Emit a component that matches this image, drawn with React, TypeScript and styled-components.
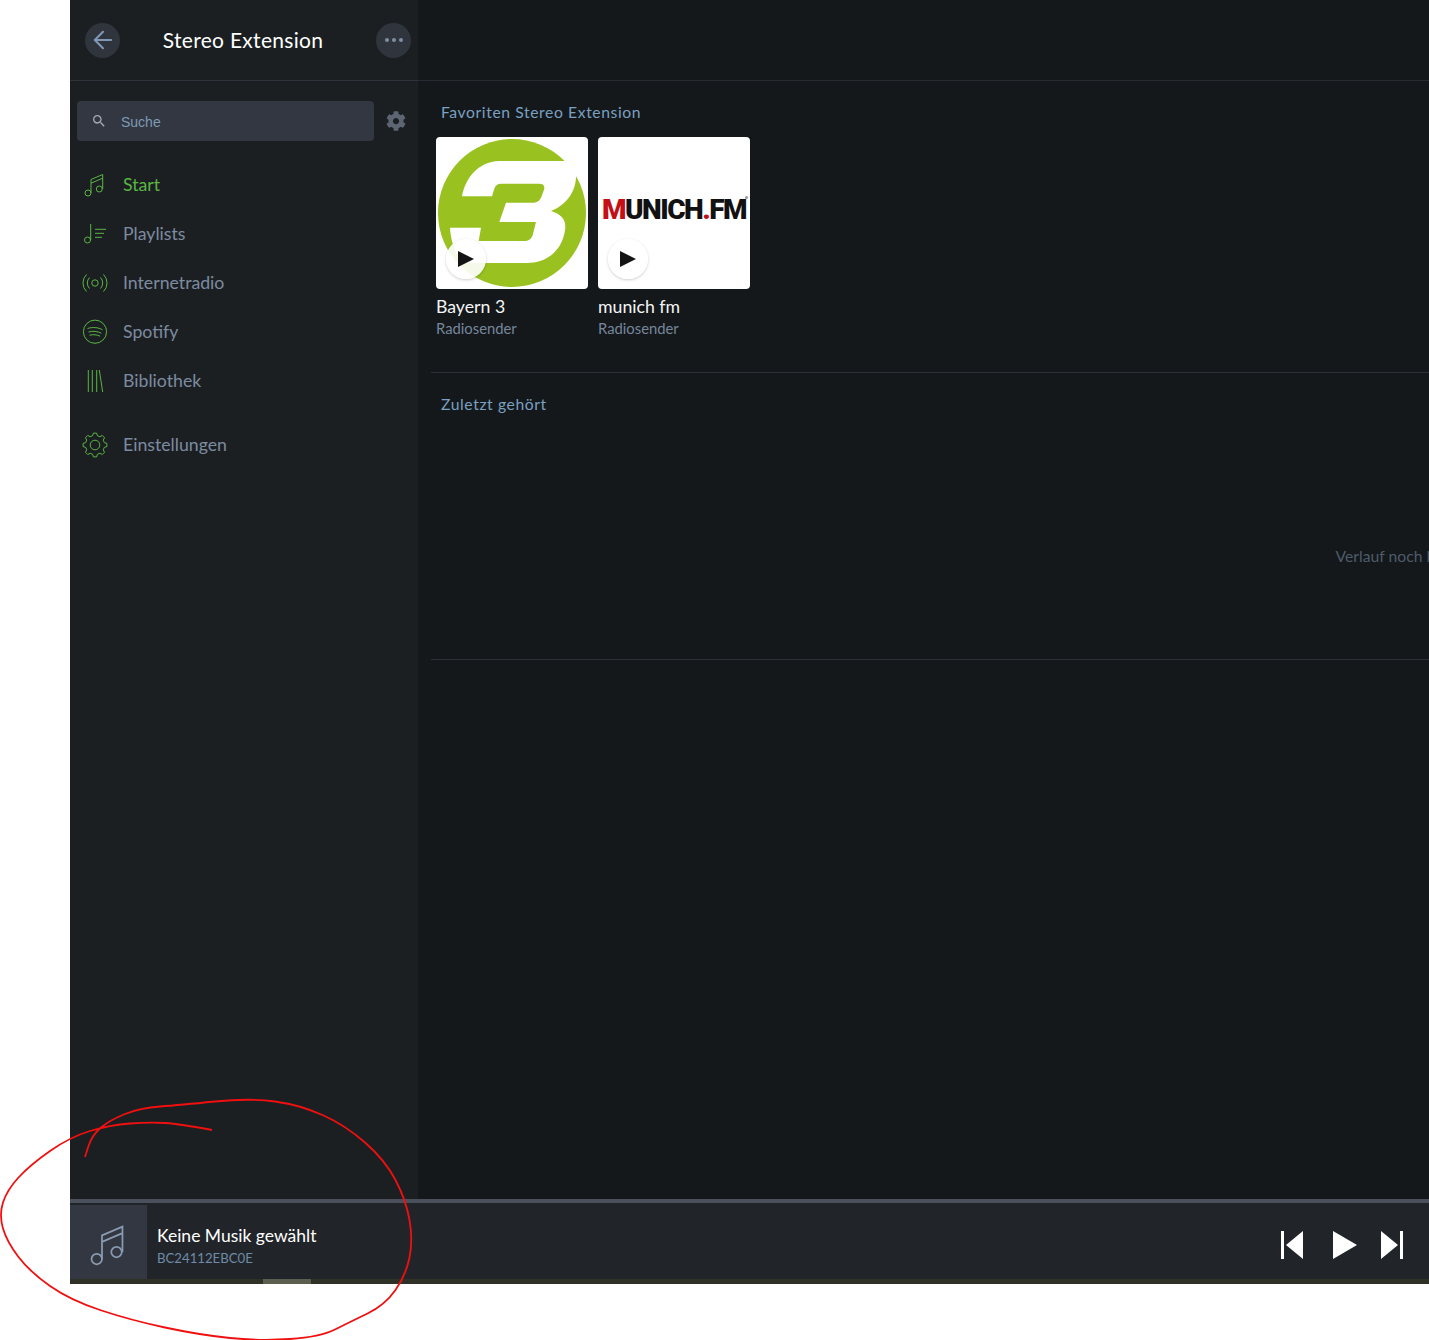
import React from "react";
import styled, { createGlobalStyle } from "styled-components";
import { ArrowLeft } from "lucide-react";
import { FaCog } from "react-icons/fa";
import { MdSearch } from "react-icons/md";

const UI_FONT = `Lato, "Noto Sans", sans-serif`;
const GREEN = "#5bb544";

const GlobalStyle = createGlobalStyle`
  html, body {
    margin: 0;
    padding: 0;
    background: #fff;
    overflow: hidden;
  }
  body {
    width: 1429px;
    height: 1340px;
    position: relative;
    font-family: ${UI_FONT};
  }
`;

const Page = styled.div`
  height: 1340px;
  padding-left: 70px;
  padding-bottom: 56px;
  box-sizing: border-box;
`;

const Shell = styled.div`
  height: 100%;
  display: flex;
  flex-direction: column;
  overflow: hidden;
`;

const Columns = styled.div`
  flex: 1;
  min-height: 0;
  display: flex;
`;

const Sidebar = styled.aside`
  width: 348px;
  flex-shrink: 0;
  background: #1b1f22;
`;

const SideHeader = styled.header`
  height: 81px;
  box-sizing: border-box;
  border-bottom: 1px solid #2f343c;
  display: flex;
  align-items: center;
  justify-content: space-between;
  padding: 0 7px 0 15px;
`;

const RoundButton = styled.button`
  width: 35px;
  height: 35px;
  border-radius: 50%;
  border: 0;
  padding: 0;
  background: #2f343d;
  color: #7f97b5;
  display: flex;
  align-items: center;
  justify-content: center;
  gap: 3px;
`;

const Dot = styled.i`
  width: 4px;
  height: 4px;
  border-radius: 50%;
  background: #7f8ea3;
`;

const Title = styled.h1`
  margin: 0 10px 0 0;
  font-size: 21px;
  line-height: 26px;
  font-weight: 400;
  letter-spacing: 0.3px;
  color: #fff;
`;

const SearchRow = styled.div`
  display: flex;
  align-items: center;
  padding: 20px 12px 0 7px;
  gap: 12px;
`;

const SearchBox = styled.div`
  flex: 1;
  height: 40px;
  border-radius: 4px;
  background: #323741;
  display: flex;
  align-items: center;
  padding-left: 14px;
  gap: 14px;
  color: #a3abb6;
  font-family: "Liberation Sans", Arial, sans-serif;
  font-size: 14px;
`;

const SearchLabel = styled.span`
  padding-top: 2px;
  color: #7f9ab5;
`;

const GearButton = styled.span`
  color: #5d6572;
  display: flex;
`;

const Nav = styled.nav`
  padding-top: 19px;
`;

const NavItem = styled.div<{ $active?: boolean; $spaced?: boolean }>`
  height: 49px;
  margin-top: ${(p) => (p.$spaced ? "15px" : "0")};
  display: flex;
  align-items: center;
  gap: 14px;
  padding-left: 11px;
  font-size: 17.7px;
  color: ${(p) => (p.$active ? GREEN : "#7d8ba0")};
`;

const NavIcon = styled.span`
  width: 28px;
  height: 28px;
  color: ${GREEN};
  display: flex;
  align-items: center;
  justify-content: center;
`;

const Main = styled.main`
  flex: 1;
  min-width: 0;
  background: #14181b;
  overflow: hidden;
`;

const MainTop = styled.div`
  height: 81px;
  box-sizing: border-box;
  border-bottom: 1px solid #262b31;
`;

const Section = styled.section<{ $height: number }>`
  width: 1926px;
  height: ${(p) => p.$height}px;
  box-sizing: border-box;
  margin-left: 13px;
  border-bottom: 1px solid #2b3036;
  position: relative;
`;

const SectionTitle = styled.h2`
  margin: 0;
  padding: 21px 0 0 10px;
  font-size: 15.7px;
  line-height: 20px;
  font-weight: 400;
  letter-spacing: 0.6px;
  color: #7aa0c2;
`;

const Cards = styled.div`
  display: flex;
  gap: 10px;
  padding: 15px 0 0 5px;
`;

const Card = styled.article`
  width: 152px;
`;

const Cover = styled.div`
  width: 152px;
  height: 152px;
  border-radius: 4px;
  background: #fff;
  position: relative;
  overflow: hidden;
  display: flex;
  align-items: center;
  justify-content: center;
`;

const PlayOverlay = styled.span`
  position: absolute;
  left: 10px;
  top: 102px;
  width: 40px;
  height: 40px;
  border-radius: 50%;
  background: rgba(255, 255, 255, 0.9);
  box-shadow: 0 1px 3px rgba(0, 0, 0, 0.2);
  display: flex;
  align-items: center;
  justify-content: center;
`;

const CardName = styled.div`
  margin-top: 7px;
  font-size: 17.7px;
  line-height: 22px;
  color: #f4f5f6;
`;

const CardKind = styled.div`
  font-size: 14.8px;
  line-height: 20px;
  color: #76869c;
`;

const MunichLogo = styled.div`
  width: 100%;
  margin-top: -6px;
  text-align: center;
  white-space: nowrap;
  font-family: Roboto, "Liberation Sans", sans-serif;
  font-size: 28px;
  line-height: 32px;
  font-weight: 900;
  letter-spacing: -1.5px;
  color: #111;
`;

const RedLetter = styled.span`
  color: #c40f17;
`;

const RegisteredMark = styled.i`
  position: absolute;
  left: 147px;
  top: 59px;
  width: 3px;
  height: 3px;
  border-radius: 50%;
  background: #9a9a9a;
`;

const EmptyNote = styled.div`
  position: absolute;
  left: 0;
  right: 0;
  top: 173px;
  text-align: center;
  font-size: 15.7px;
  line-height: 20px;
  color: #4f5b6a;
  white-space: nowrap;
`;

const Player = styled.footer`
  height: 85px;
  flex-shrink: 0;
  box-sizing: border-box;
  border-top: 4px solid #4a505c;
  background: #212529;
  display: flex;
  flex-direction: column;
`;

const PlayerRow = styled.div`
  flex: 1;
  min-height: 0;
  display: flex;
  align-items: stretch;
  padding-top: 2px;
`;

const PlayerArt = styled.div`
  width: 77px;
  box-sizing: border-box;
  padding-top: 6px;
  background: #323741;
  color: #8a9bb1;
  display: flex;
  align-items: center;
  justify-content: center;
`;

const PlayerText = styled.div`
  flex: 1;
  padding: 19px 0 0 10px;
`;

const PlayerTitle = styled.div`
  font-size: 17.5px;
  line-height: 24px;
  color: #fff;
`;

const PlayerSub = styled.div`
  font-size: 13.2px;
  line-height: 20px;
  color: #6f8aa8;
`;

const Transport = styled.div`
  display: flex;
  align-items: center;
  gap: 23px;
  padding: 6px 25px 0 0;
`;

const Progress = styled.div`
  height: 5px;
  flex-shrink: 0;
  background: #2f3126;
  padding-left: 193px;
`;

const ProgressThumb = styled.div`
  width: 48px;
  height: 100%;
  background: #5c5e50;
`;

const Scribble = styled.svg`
  position: absolute;
  left: 0;
  top: 0;
  pointer-events: none;
`;

const NoteIcon = ({ size }: { size: number }) => (
  <svg width={size} height={size} viewBox="0 0 24 24" fill="none" stroke="currentColor" strokeWidth={1}>
    <circle cx="5" cy="20" r="3" />
    <circle cx="16.3" cy="16" r="3" />
    <path d="M8 20V6.5L19.7 1.5V16M8 10.2L19.7 5.2" />
  </svg>
);

const PlaylistIcon = () => (
  <svg width="28" height="28" viewBox="0 0 28 28" fill="none" stroke="currentColor" strokeWidth={1}>
    <circle cx="6.5" cy="20" r="3" />
    <path d="M9.7 20V4M14 9.3H25M14 13.3H23M14 17.3H21" />
  </svg>
);

const RadioIcon = () => (
  <svg width="28" height="28" viewBox="0 0 28 28" fill="none" stroke="currentColor" strokeWidth={1}>
    <circle cx="14" cy="14" r="3.2" />
    <path d="M8.5 8.5a8 8 0 0 0 0 11M19.5 8.5a8 8 0 0 1 0 11" />
    <path d="M5.5 5.5a12 12 0 0 0 0 17M22.5 5.5a12 12 0 0 1 0 17" />
  </svg>
);

const SpotifyIcon = () => (
  <svg width="28" height="28" viewBox="0 0 28 28" fill="none" stroke="currentColor" strokeWidth={1}>
    <circle cx="14" cy="13.7" r="11.6" />
    <path d="M6.5 10.5c5-1.6 10.5-1.2 15 1.2M7.5 14c4.2-1.2 9-.8 12.8 1.2M8.5 17.2c3.6-.9 7.4-.6 10.6 1" />
  </svg>
);

const LibraryIcon = () => (
  <svg width="28" height="28" viewBox="0 0 28 28" fill="none" stroke="currentColor" strokeWidth={1}>
    <path d="M7.3 3V25M11.3 3V25M15.7 3V25" />
    <path d="M18.3 3L21.7 25" />
  </svg>
);

// eight square teeth round a ring
const gearOutline = () => {
  const teeth = 8;
  const pts: string[] = [];
  for (let i = 0; i < teeth; i++) {
    const a = (i / teeth) * Math.PI * 2;
    const step = (Math.PI * 2) / teeth;
    const at = (r: number, t: number) => `${(14 + r * Math.cos(t)).toFixed(2)} ${(14 + r * Math.sin(t)).toFixed(2)}`;
    pts.push(at(9.6, a - step * 0.32), at(12, a - step * 0.17), at(12, a + step * 0.17), at(9.6, a + step * 0.32));
  }
  return `M${pts.join("L")}Z`;
};

const GearIcon = () => (
  <svg width="28" height="28" viewBox="0 0 28 28" fill="none" stroke="currentColor" strokeWidth={1} strokeLinejoin="round">
    <path d={gearOutline()} />
    <circle cx="14" cy="14" r="4.8" />
  </svg>
);

const PlayGlyph = () => (
  <svg width="16" height="16" viewBox="0 0 16 16">
    <path d="M0 0L16 8L0 16Z" fill="#141414" />
  </svg>
);

const Bayern3Logo = () => (
  <svg width="152" height="152" viewBox="0 0 456 456">
    <circle cx="228" cy="228" r="222" fill="#99c221" />
    <path
      fill="#fff"
      d="M78 178C88 125 125 74 190 72L385 72L410 40L450 80L420 118C420 165 390 205 345 222C378 232 392 250 387 280C378 340 335 378 270 378L80 378C60 350 45 320 42 272L135 272L128 312L270 312Q285 310 290 295L300 255L190 255L210 197L295 197Q310 195 316 180L325 155Q326 140 310 140L195 140Q180 140 175 155L168 178Z"
    />
  </svg>
);

const PrevIcon = () => (
  <svg width="24" height="28" viewBox="0 0 24 28" fill="#fff">
    <path d="M1 0H4V28H1ZM23 0V28L6 14Z" />
  </svg>
);

const PlayIcon = () => (
  <svg width="30" height="28" viewBox="0 0 30 28" fill="#fff">
    <path d="M6 0L30 14L6 28Z" />
  </svg>
);

const NextIcon = () => (
  <svg width="24" height="28" viewBox="0 0 24 28" fill="#fff">
    <path d="M1 0L18 14L1 28ZM20 0H23V28H20Z" />
  </svg>
);

const scribblePoints: [number, number][] = [
  [212, 1130], [180, 1124], [150, 1122], [110, 1125], [70, 1137], [30, 1165], [7, 1190], [-1, 1215],
  [7, 1242], [30, 1272], [70, 1300], [130, 1320], [200, 1335], [260, 1341], [320, 1337], [350, 1322],
  [385, 1305], [406, 1275], [413, 1240], [406, 1200], [385, 1160], [345, 1125], [300, 1105], [250, 1098],
  [180, 1105], [140, 1108], [110, 1120], [92, 1135], [85, 1157],
];

// smooth line through the midpoints, good enough for a hand drawn circle
const smoothPath = (pts: [number, number][]) => {
  let d = `M${pts[0][0]} ${pts[0][1]}`;
  for (let i = 1; i < pts.length - 1; i++) {
    const mx = (pts[i][0] + pts[i + 1][0]) / 2;
    const my = (pts[i][1] + pts[i + 1][1]) / 2;
    d += `Q${pts[i][0]} ${pts[i][1]} ${mx} ${my}`;
  }
  const last = pts[pts.length - 1];
  return `${d}L${last[0]} ${last[1]}`;
};

const navItems = [
  { label: "Start", icon: <NoteIcon size={24} />, active: true },
  { label: "Playlists", icon: <PlaylistIcon /> },
  { label: "Internetradio", icon: <RadioIcon /> },
  { label: "Spotify", icon: <SpotifyIcon /> },
  { label: "Bibliothek", icon: <LibraryIcon /> },
  { label: "Einstellungen", icon: <GearIcon />, spaced: true },
];

export default function App() {
  return (
    <Page>
      <GlobalStyle />
      <Shell>
        <Columns>
          <Sidebar>
            <SideHeader>
              <RoundButton>
                <ArrowLeft size={28} strokeWidth={1.8} />
              </RoundButton>
              <Title>Stereo Extension</Title>
              <RoundButton>
                <Dot />
                <Dot />
                <Dot />
              </RoundButton>
            </SideHeader>
            <SearchRow>
              <SearchBox>
                <MdSearch size={16} />
                <SearchLabel>Suche</SearchLabel>
              </SearchBox>
              <GearButton>
                <FaCog size={20} />
              </GearButton>
            </SearchRow>
            <Nav>
              {navItems.map((item) => (
                <NavItem key={item.label} $active={item.active} $spaced={item.spaced}>
                  <NavIcon>{item.icon}</NavIcon>
                  {item.label}
                </NavItem>
              ))}
            </Nav>
          </Sidebar>
          <Main>
            <MainTop />
            <Section $height={292}>
              <SectionTitle>Favoriten Stereo Extension</SectionTitle>
              <Cards>
                <Card>
                  <Cover>
                    <Bayern3Logo />
                    <PlayOverlay>
                      <PlayGlyph />
                    </PlayOverlay>
                  </Cover>
                  <CardName>Bayern 3</CardName>
                  <CardKind>Radiosender</CardKind>
                </Card>
                <Card>
                  <Cover>
                    <MunichLogo>
                      <RedLetter>M</RedLetter>UNICH<RedLetter>.</RedLetter>FM
                    </MunichLogo>
                    <RegisteredMark />
                    <PlayOverlay>
                      <PlayGlyph />
                    </PlayOverlay>
                  </Cover>
                  <CardName>munich fm</CardName>
                  <CardKind>Radiosender</CardKind>
                </Card>
              </Cards>
            </Section>
            <Section $height={287}>
              <SectionTitle>Zuletzt gehört</SectionTitle>
              <EmptyNote>Verlauf noch leer</EmptyNote>
            </Section>
          </Main>
        </Columns>
        <Player>
          <PlayerRow>
            <PlayerArt>
              <NoteIcon size={42} />
            </PlayerArt>
            <PlayerText>
              <PlayerTitle>Keine Musik gewählt</PlayerTitle>
              <PlayerSub>BC24112EBC0E</PlayerSub>
            </PlayerText>
            <Transport>
              <PrevIcon />
              <PlayIcon />
              <NextIcon />
            </Transport>
          </PlayerRow>
          <Progress>
            <ProgressThumb />
          </Progress>
        </Player>
      </Shell>
      <Scribble width="1429" height="1340" viewBox="0 0 1429 1340" fill="none">
        <path d={smoothPath(scribblePoints)} stroke="#f01010" strokeWidth="1.8" />
      </Scribble>
    </Page>
  );
}
